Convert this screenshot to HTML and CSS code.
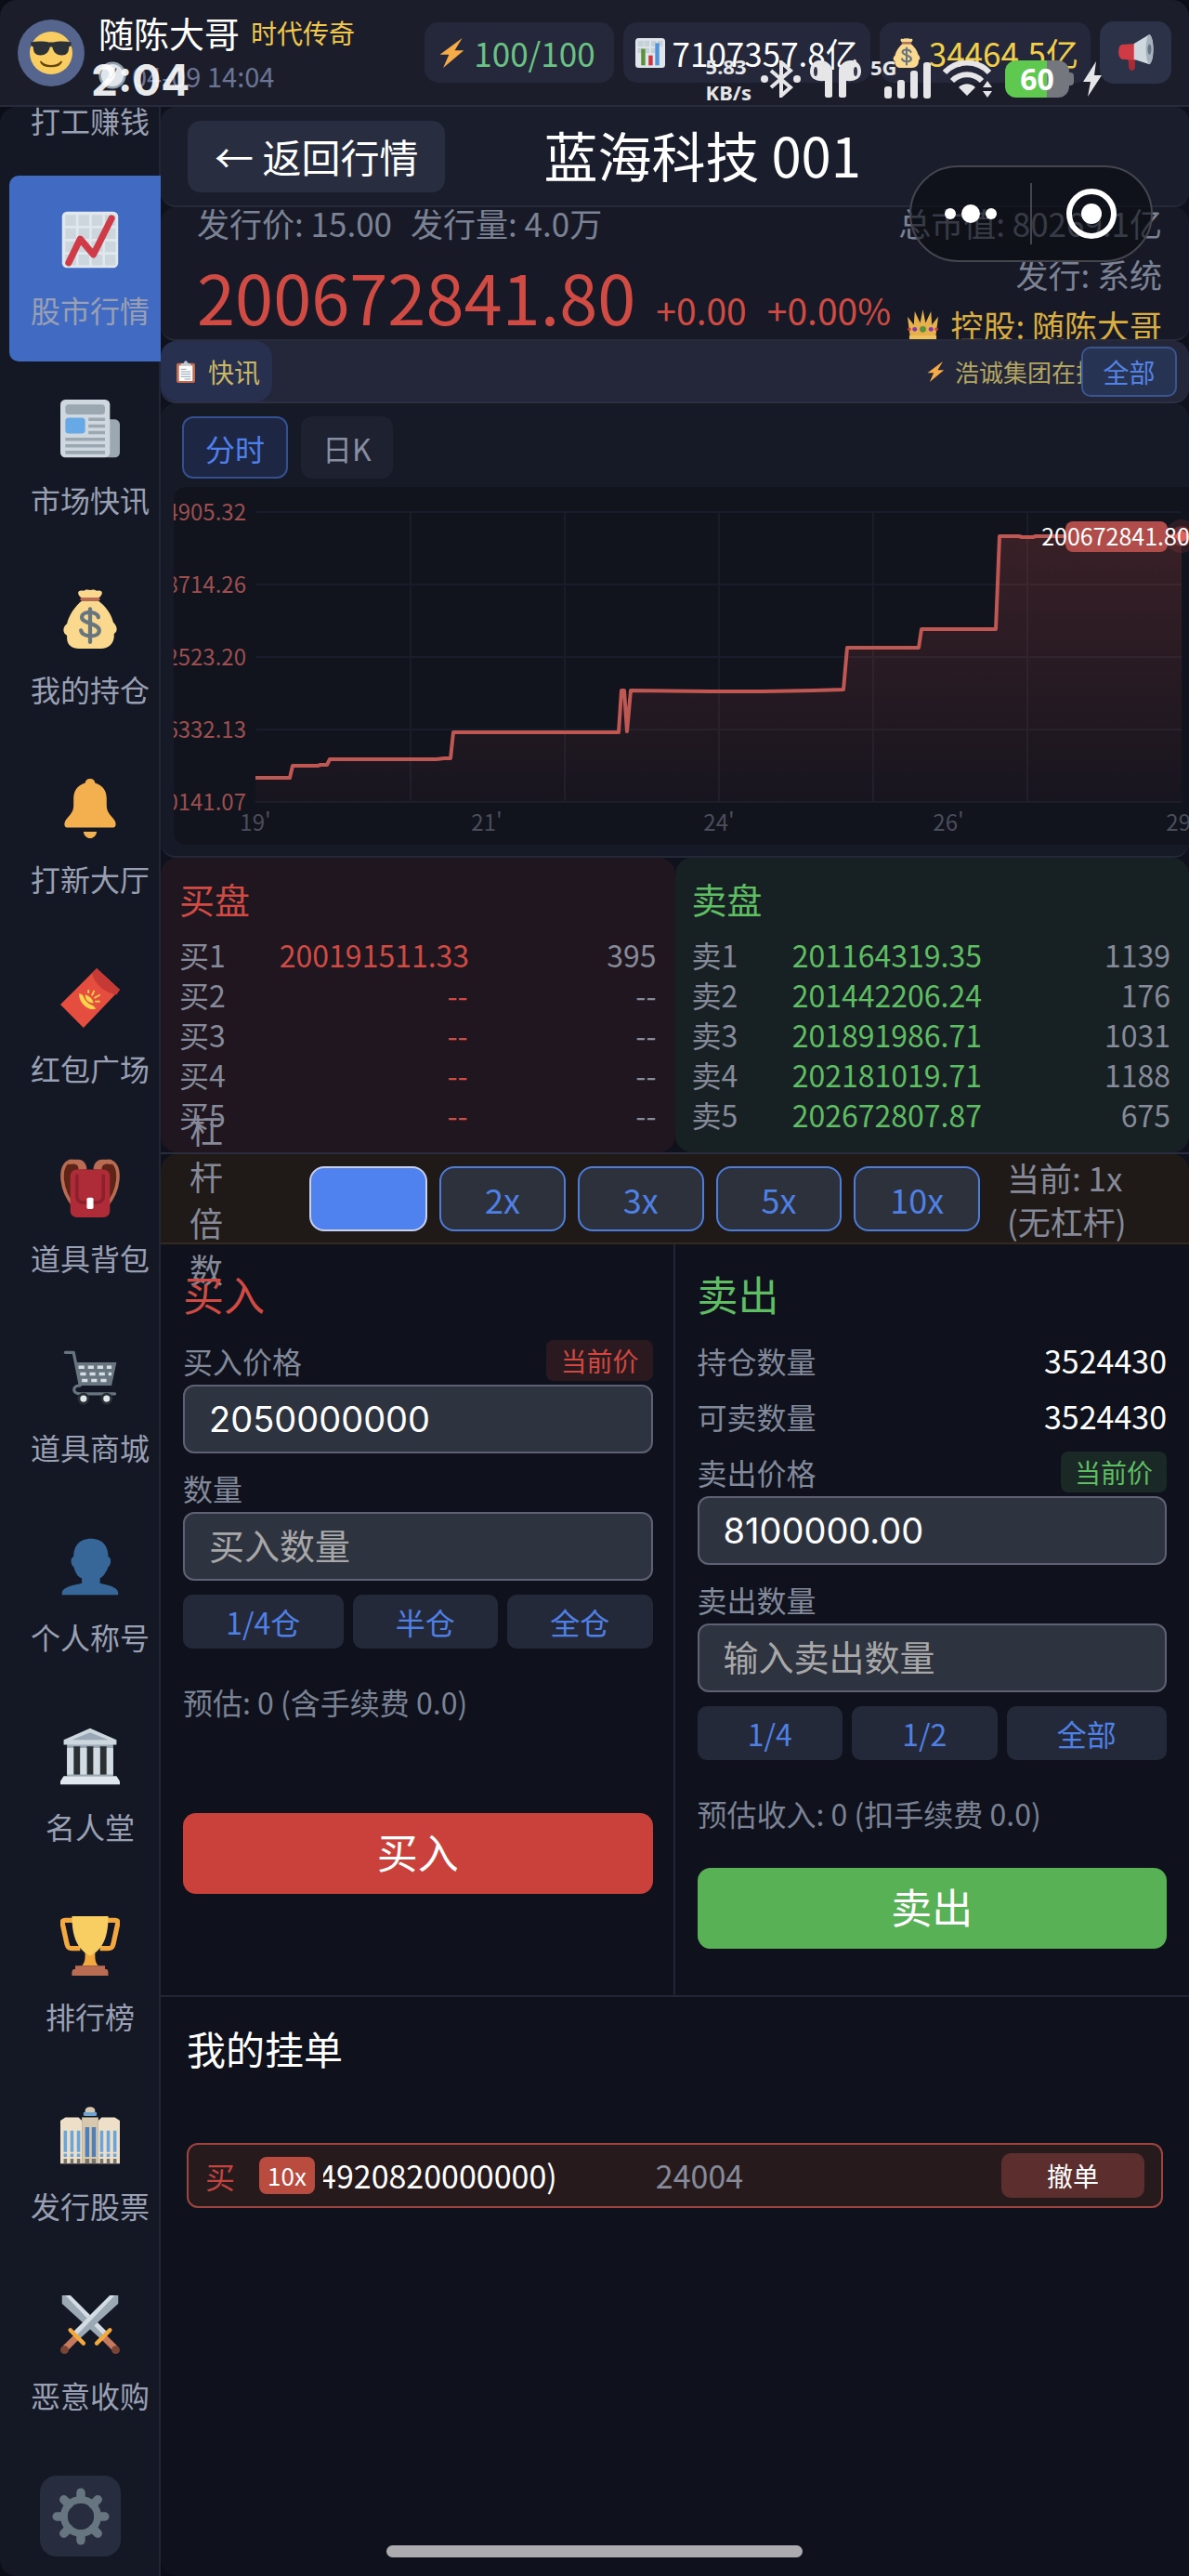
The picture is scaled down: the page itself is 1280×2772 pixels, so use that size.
FILE: index.html
```html
<!DOCTYPE html>
<html lang="zh-CN">
<head>
    <meta charset="UTF-8">
    <meta name="viewport" content="width=device-width, initial-scale=1">
    <title>蓝海科技 001</title>
    <link rel="stylesheet" href="styles.css">
</head>
<body>
    <!-- 图标库 -->
    <svg class="sprite" aria-hidden="true">
        <symbol id="i-cool" viewBox="0 0 36 36">
            <circle cx="18" cy="18" r="18" fill="#f9cd62"/>
            <path d="M1 9c5-1 11-1 15 0h4c4-1 10-1 15 0v3l-2 1c0 5-2 7-6 7s-7-2-8-7h-2c-1 5-4 7-8 7s-6-2-6-7l-2-1z" fill="#2b3136"/>
            <path d="M9 25c5 5 13 5 18 0-2 6-16 6-18 0z" fill="#664500" stroke="#664500"/>
        </symbol>
        <symbol id="i-clock" viewBox="0 0 36 36">
            <circle cx="18" cy="18" r="16" fill="#dfe5ea" stroke="#93a1ad" stroke-width="3"/>
            <path d="M18 19l5-10M18 19l-4 3" stroke="#55626d" stroke-width="2" fill="none"/>
        </symbol>
        <symbol id="i-bolt" viewBox="0 0 36 36">
            <path d="M31 0L4 20h11L8 36l25-21H22z" fill="#f6ab46"/>
        </symbol>
        <symbol id="i-bars" viewBox="0 0 36 36">
            <rect width="36" height="36" rx="4" fill="#dfe6eb"/>
            <path d="M3 3h7v7H3zM11 3h6v7h-6zM19 3h6v7h-6zM27 3h6v7h-6zM3 12h7v6H3zM11 12h6v6h-6zM19 12h6v6h-6z" fill="#c6d0d8"/>
            <path d="M7 13h5v20H7z" fill="#5c913b"/>
            <path d="M16 21h5v12h-5z" fill="#ca3540"/>
            <path d="M24 6h5v27h-5z" fill="#5095d8"/>
        </symbol>
        <symbol id="i-bag" viewBox="0 0 36 36">
            <path d="M13 7h10c4 3 8 8 9 13 3 3 2.500 6 .5 7 .5 6-3.500 9-8 9h-13C7 36 3.500 34 4 28 1.500 27 1 23 4 21 5 16 9 10 13 7z" fill="#fad98f"/>
            <path d="M12.500 5C10 3 10 0 14 1c2-1.300 3-.5 4-.5s2-.8 4 .5c4-1 4 2 1.500 4z" fill="#fad98f"/>
            <rect x="12" y="5" width="12" height="2" rx="1" fill="#bb6c52"/>
            <path d="M23 17c-1-4-10-4-10 0 0 4 10.500 3.500 10.500 8 0 4.500-10 4.500-11 0M18 12v20" fill="none" stroke="#67757f" stroke-width="2.400" stroke-linecap="round"/>
        </symbol>
        <symbol id="i-horn" viewBox="0 0 36 36">
            <path d="M10 18h7v14c0 4-6 4-6 0z" fill="#a82c36"/>
            <path d="M4 10l14-1v16l-14-1c-4-1-4-13 0-14z" fill="#cf3b45"/>
            <path d="M16 9L31 0c5 4 5 25 0 29l-15-5z" fill="#cfd8de"/>
            <ellipse cx="31" cy="14.500" rx="3.500" ry="14" fill="#a5b2bd"/>
            <ellipse cx="31" cy="14.500" rx="1.800" ry="5" fill="#66757f"/>
        </symbol>
        <symbol id="i-crown" viewBox="0 0 36 36">
            <path d="M4 33L1 9l7 9 1-15 6 13 3-15 3 15 6-13 1 15 7-9-3 24z" fill="#e6b04c"/>
            <path d="M3 30h30v6H3z" fill="#eec15c"/>
            <circle cx="18" cy="23" r="3.500" fill="#5c913b"/>
            <circle cx="9" cy="23" r="2.500" fill="#8536b0"/><circle cx="27" cy="23" r="2.500" fill="#8536b0"/>
            <circle cx="3" cy="23" r="1.800" fill="#cf3b45"/><circle cx="33" cy="23" r="1.800" fill="#cf3b45"/>
        </symbol>
        <symbol id="i-clip" viewBox="0 0 36 36">
            <rect x="3" y="4" width="30" height="32" rx="3" fill="#bf6b50"/>
            <path d="M7 8h22v25H7z" fill="#fff"/>
            <path d="M10 8V5l5-1c0-5 6-5 6 0l5 1v3z" fill="#bfcad2"/>
            <path d="M10 14h9M10 18h16M10 22h16M10 26h16M16 30h10" stroke="#8ea0b0" stroke-width="1.500"/>
        </symbol>
        <symbol id="i-chart" viewBox="0 0 36 36">
            <rect x="1" y="1" width="34" height="34" rx="3" fill="#e1e8ed"/>
            <path d="M3 3h6.500v6.500H3zM11 3h6.500v6.500H11zM19 3h6.500v6.500H19zM27 3h6.500v6.500H27zM3 11h6.500v6.500H3zM11 11h6.500v6.500H11zM19 11h6.500v6.500H19zM27 11h6.500v6.500H27zM3 19h6.500v6.500H3zM11 19h6.500v6.500H11zM19 19h6.500v6.500H19zM27 19h6.500v6.500H27zM3 27h6.500v6.500H3zM11 27h6.500v6.500H11zM19 27h6.500v6.500H19zM27 27h6.500v6.500H27z" fill="#ccd6dd"/>
            <path d="M5 32l7-14.500 8 9.500L31 5" fill="none" stroke="#cf3b47" stroke-width="4" stroke-linecap="round" stroke-linejoin="round"/>
        </symbol>
        <symbol id="i-news" viewBox="0 0 36 36">
            <rect x="26" y="12" width="10" height="23" rx="3" fill="#9ba7b1"/>
            <rect y="0" width="30" height="35" rx="3" fill="#cfd8de"/>
            <rect x="3" y="3" width="24" height="6" rx="2" fill="#9ba7b1"/>
            <rect x="3" y="11" width="12" height="9.500" rx="2" fill="#66a9e6"/>
            <path d="M17 12h10M17 16h10M17 20h10M3 24h24M3 28h24M3 32h24" stroke="#9ba7b1" stroke-width="2"/>
        </symbol>
        <symbol id="i-bell" viewBox="0 0 36 36">
            <path d="M18 0a3 3 0 0 1 3 2.500c5 1.500 7 5 7 9.500v4c0 5 3 6 5 9.500 1 2 .5 4-1 4H4c-1.500 0-2-2-1-4C5 22 8 21 8 16v-4c0-4.500 2-8 7-9.500A3 3 0 0 1 18 0zM14 32h8c0 2-2 4-4 4s-4-2-4-4z" fill="#f4b04f"/>
        </symbol>
        <symbol id="i-red" viewBox="0 0 36 36">
            <path d="M22 0l14 13-22 23L0 22z" fill="#e54e3e"/>
            <path d="M22 0l14 13-2 3c-7-1-13-6-15-13z" fill="#c63a35"/>
            <path d="M11.500 15c-1 5 5 11 10 9.500-1-1.500-2-2-3-2.500-2-1-4-3-4.500-5-.5-1-1.500-1.500-2.500-2z" fill="#fbd34d"/>
            <path d="M15 16c2 0 5 3 5 5-3 0-5-2-5-5z" fill="#fbd34d"/>
            <path d="M17 15l0-2M19 16.500l1.500-3M20.500 18l3.500-2M21 20l3 0" stroke="#fbd34d"/>
        </symbol>
        <symbol id="i-pack" viewBox="0 0 36 36">
            <path d="M8 29C-1 18-1 2 7 2c4 0 6 1 7 4" fill="#5f2416" stroke="#b96c52" stroke-width="2"/>
            <path d="M28 29c9-11 9-27 1-27-4 0-6 1-7 4" fill="#5f2416" stroke="#b96c52" stroke-width="2"/>
            <path d="M5 1h6c3 0 5 3 5 6h-5c0-3-2-4-6-3zM31 1h-6c-3 0-5 3-5 6h5c0-3 2-4 6-3z" fill="#b96c52"/>
            <rect x="6" y="7" width="24" height="29" rx="4" fill="#ad2c38"/>
            <path d="M10 10v13c0 3 2 4 4 4h8c2 0 4-1 4-4V10" fill="none" stroke="#8e1f2c" stroke-width="2"/>
            <rect x="16" y="24" width="4" height="7" rx="1" fill="#fff"/>
        </symbol>
        <symbol id="i-cart" viewBox="0 0 36 36">
            <path d="M3 3h5l4 20c-5 0-5 5 0 5h21" fill="none" stroke="#66757f" stroke-width="1.800" stroke-linecap="round" stroke-linejoin="round"/>
            <path d="M9 9h25l-3 14H12z" fill="#66757f"/>
            <path d="M11 12h20M12 16h19M13 20h17" stroke="#d5dde2" stroke-width="2" stroke-dasharray="3.500 2.200"/>
            <circle cx="14" cy="31" r="3.600" fill="#292f33"/><circle cx="28" cy="31" r="3.600" fill="#292f33"/>
            <circle cx="14" cy="31" r="2" fill="#e1e8ed"/><circle cx="28" cy="31" r="2" fill="#e1e8ed"/>
        </symbol>
        <symbol id="i-bust" viewBox="0 0 36 36">
            <path d="M18.500 1C26 1 29 6 29 12c2 0 2 5 0 6-1 3-3 6-5 7v3c4 1 11 2 11 6v1H1v-1c0-4 8-5 12-6v-3c-3-1-4-4-5-7-2-1-2-6 0-6 0-6 3-11 10.500-11z" fill="#366798"/>
        </symbol>
        <symbol id="i-bank" viewBox="0 0 36 36">
            <path d="M4 10h28v20H4z" fill="#9ba9b4"/>
            <path d="M18 1L2 8v3h32V8z" fill="#ccd6dd"/>
            <path d="M18 3.500L7 8h22z" fill="#99a8b4"/>
            <path d="M8 12h4v17H8zM16 12h4v17h-4zM24 12h4v17h-4z" fill="#292f33"/>
            <path d="M4 13h4v16H4zM12 13h4v16h-4zM20 13h4v16h-4zM28 13h4v16h-4z" fill="#d3dce2"/>
            <path d="M2 30h32l2 3v2H0v-2z" fill="#e1e8ed"/>
        </symbol>
        <symbol id="i-cup" viewBox="0 0 36 36">
            <path d="M8 2.500H3c-2 0-2 1-1.500 3L4 17c.5 2 1 2.500 3 2.500h5M28 2.500h5c2 0 2 1 1.500 3L32 17c-.5 2-1 2.500-3 2.500h-5" fill="none" stroke="#f4a93f" stroke-width="3"/>
            <path d="M15 22h6c0 4 0 6 2 8H13c2-2 2-4 2-8z" fill="#f4a93f"/>
            <path d="M7 0h22c0 12-3 20-11 24C10 20 7 12 7 0z" fill="#f8ce62"/>
            <path d="M9 30h18v2c2 0 2 1 2 4H7c0-3 0-4 2-4z" fill="#b96c52"/>
        </symbol>
        <symbol id="i-hall" viewBox="0 0 36 36">
            <path d="M0 9l3-2h8l2 2v26H0zM36 9l-3-2h-8l-2 2v26h13z" fill="#eddfc8"/>
            <path d="M13 7h10v28H13z" fill="#d8c8ad"/>
            <path d="M15 3c0-3 6-3 6 0v3h-6z" fill="#d8c8ad"/>
            <path d="M14 4h8v2h-8zM2 15h2v13H2zM6 15h2v13H6zM10 15h2v13h-2zM24 15h2v13h-2zM28 15h2v13h-2zM32 15h2v13h-2zM2 29h2v2H2zM6 29h2v2H6zM10 29h2v2h-2zM24 29h2v2h-2zM28 29h2v2h-2zM32 29h2v2h-2z" fill="#69a5db"/>
            <path d="M15 13h2.500v18H15zM19 13h2.500v18H19z" fill="#4d7fb8"/>
            <path d="M2 32h2v3H2zM6 32h2v3H6zM10 32h2v3h-2zM15 32h2.500v3H15zM19 32h2.500v3H19zM24 32h2v3h-2zM28 32h2v3h-2zM32 32h2v3h-2z" fill="#77736d"/>
        </symbol>
        <symbol id="i-swords" viewBox="0 0 36 36">
            <path d="M1 0h5l22 22-4 4L1 5z" fill="#9aa9b4"/><path d="M6 0l22 22-2 2L3 0z" fill="#d3dce2"/>
            <path d="M26 25l7 7" stroke="#c6795c" stroke-width="4"/><circle cx="33.500" cy="33" r="2.500" fill="#7b4536"/>
            <path d="M22 29l8-8" stroke="#f4a93f" stroke-width="2.500" stroke-linecap="round"/>
            <path d="M35 0h-5L8 22l4 4L35 5z" fill="#9aa9b4"/><path d="M30 0L8 22l2 2L33 0z" fill="#d3dce2"/>
            <path d="M10 25l-7 7" stroke="#c6795c" stroke-width="4"/><circle cx="2.500" cy="33" r="2.500" fill="#7b4536"/>
            <path d="M14 29l-8-8" stroke="#f4a93f" stroke-width="2.500" stroke-linecap="round"/>
        </symbol>
        <symbol id="i-gear" viewBox="0 0 36 36">
            <circle cx="18" cy="18" r="10.500" fill="none" stroke="#66757f" stroke-width="4.500"/>
            <path d="M18 3v4M18 29v4M3 18h4M29 18h4M7.400 7.400l3 3M25.600 25.600l3 3M28.600 7.400l-3 3M10.400 25.600l-3 3" stroke="#66757f" stroke-width="5.500" stroke-linecap="round"/>
        </symbol>
    </svg>

    <div class="page">
        <header class="topbar">
            <div class="avatar"><svg><use href="#i-cool"/></svg></div>
            <div class="player">
                <div class="player-name"><span>随陈大哥</span><span class="player-rank">时代传奇</span></div>
                <div class="player-time"><svg><use href="#i-clock"/></svg>04-09 14:04</div>
            </div>
            <div class="stats">
                <div class="stat stat-energy"><svg><use href="#i-bolt"/></svg>100/100</div>
                <div class="stat"><svg><use href="#i-bars"/></svg>7107357.8亿</div>
                <div class="stat stat-gold"><svg><use href="#i-bag"/></svg>34464.5亿</div>
                <button class="horn" type="button" aria-label="公告"><svg><use href="#i-horn"/></svg></button>
            </div>
        </header>

        <div class="layout">
            <aside class="sidebar">
                <nav class="menu">
                    <a class="menu-item" href="#"><svg><use href="#i-bag"/></svg>打工赚钱</a>
                    <a class="menu-item active" href="#"><svg><use href="#i-chart"/></svg>股市行情</a>
                    <a class="menu-item" href="#"><svg><use href="#i-news"/></svg>市场快讯</a>
                    <a class="menu-item" href="#"><svg><use href="#i-bag"/></svg>我的持仓</a>
                    <a class="menu-item" href="#"><svg><use href="#i-bell"/></svg>打新大厅</a>
                    <a class="menu-item" href="#"><svg><use href="#i-red"/></svg>红包广场</a>
                    <a class="menu-item" href="#"><svg><use href="#i-pack"/></svg>道具背包</a>
                    <a class="menu-item" href="#"><svg><use href="#i-cart"/></svg>道具商城</a>
                    <a class="menu-item" href="#"><svg><use href="#i-bust"/></svg>个人称号</a>
                    <a class="menu-item" href="#"><svg><use href="#i-bank"/></svg>名人堂</a>
                    <a class="menu-item" href="#"><svg><use href="#i-cup"/></svg>排行榜</a>
                    <a class="menu-item" href="#"><svg><use href="#i-hall"/></svg>发行股票</a>
                    <a class="menu-item" href="#"><svg><use href="#i-swords"/></svg>恶意收购</a>
                </nav>
                <button class="gear" type="button" aria-label="设置"><svg><use href="#i-gear"/></svg></button>
            </aside>

            <main class="main">
                <div class="stock-head">
                    <button class="back" type="button">← 返回行情</button>
                    <h1>蓝海科技 001</h1>
                </div>

                <section class="info">
                    <div class="info-left">
                        <div class="issue"><span>发行价: 15.00</span><span>发行量: 4.0万</span></div>
                        <div class="quote">
                            <span class="price">200672841.80</span>
                            <span class="change">+0.00</span>
                            <span class="change">+0.00%</span>
                        </div>
                    </div>
                    <div class="info-right">
                        <div>总市值: 80269.1亿</div>
                        <div>发行: 系统</div>
                        <div class="holder"><svg><use href="#i-crown"/></svg>控股: 随陈大哥</div>
                    </div>
                </section>

                <section class="ticker">
                    <div class="ticker-tag"><svg><use href="#i-clip"/></svg>快讯</div>
                    <div class="ticker-text"><span><svg><use href="#i-bolt"/></svg>浩诚集团在拉</span></div>
                    <button class="ticker-all" type="button">全部</button>
                </section>

                <section class="chart-box">
                    <div class="tabs">
                        <button class="tab active" type="button">分时</button>
                        <button class="tab" type="button">日K</button>
                    </div>
                    <div class="chart">
                        <svg viewBox="0 0 1093 385">
                            <defs>
                                <linearGradient id="area" x1="0" y1="0" x2="0" y2="1">
                                    <stop offset="0" stop-color="#d9534f" stop-opacity="0.200"/>
                                    <stop offset="1" stop-color="#d9534f" stop-opacity="0.030"/>
                                </linearGradient>
                            </defs>
                            <path class="grid" d="M88 27h997M88 105h997M88 183h997M88 261h997M88 339h997M255 27v312M421 27v312M587 27v312M753 27v312M919 27v312"/>
                            <path fill="url(#area)" d="M88 313h37l3-13h27l3-1h7l3-6h115l8-1h7l3-28h178l3-45h3l3 44 4-44 91 1h53l53-1 32-1 4-45h77l3-20h80l4-100h21l3 1h12l3-1h157v286H88z"/>
                            <path class="line" d="M88 313h37l3-13h27l3-1h7l3-6h115l8-1h7l3-28h178l3-45h3l3 44 4-44 91 1h53l53-1 32-1 4-45h77l3-20h80l4-100h21l3 1h12l3-1h157"/>
                            <g class="axis-y">
                                <text x="78" y="36">4905.32</text>
                                <text x="78" y="114">8714.26</text>
                                <text x="78" y="192">2523.20</text>
                                <text x="78" y="270">6332.13</text>
                                <text x="78" y="348">0141.07</text>
                            </g>
                            <g class="axis-x">
                                <text x="88" y="370">19'</text>
                                <text x="337" y="370">21'</text>
                                <text x="587" y="370">24'</text>
                                <text x="834" y="370">26'</text>
                                <text x="1085" y="370">29'</text>
                            </g>
                            <circle cx="1085" cy="53" r="18" fill="#d9534f" opacity="0.150"/>
                            <circle cx="1085" cy="53" r="11" fill="#d9534f" opacity="0.300"/>
                            <circle cx="1085" cy="53" r="6" fill="#e0605a"/>
                            <rect x="960" y="37" width="110" height="33" rx="8" fill="#b04c4a"/>
                            <text class="now" x="1014" y="63">200672841.80</text>
                        </svg>
                    </div>
                </section>

                <section class="book">
                    <div class="book-side buy">
                        <h2>买盘</h2>
                        <table>
                            <tr><td>买1</td><td>200191511.33</td><td>395</td></tr>
                            <tr><td>买2</td><td>--</td><td>--</td></tr>
                            <tr><td>买3</td><td>--</td><td>--</td></tr>
                            <tr><td>买4</td><td>--</td><td>--</td></tr>
                            <tr><td>买5</td><td>--</td><td>--</td></tr>
                        </table>
                    </div>
                    <div class="book-side sell">
                        <h2>卖盘</h2>
                        <table>
                            <tr><td>卖1</td><td>201164319.35</td><td>1139</td></tr>
                            <tr><td>卖2</td><td>201442206.24</td><td>176</td></tr>
                            <tr><td>卖3</td><td>201891986.71</td><td>1031</td></tr>
                            <tr><td>卖4</td><td>202181019.71</td><td>1188</td></tr>
                            <tr><td>卖5</td><td>202672807.87</td><td>675</td></tr>
                        </table>
                    </div>
                </section>

                <section class="lever">
                    <div class="lever-label">杠杆倍数</div>
                    <div class="lever-list">
                        <button class="lever-btn active" type="button" aria-label="1x"></button>
                        <button class="lever-btn" type="button">2x</button>
                        <button class="lever-btn" type="button">3x</button>
                        <button class="lever-btn" type="button">5x</button>
                        <button class="lever-btn" type="button">10x</button>
                    </div>
                    <div class="lever-now">当前: 1x<br>(无杠杆)</div>
                </section>

                <section class="trade">
                    <form class="panel buy">
                        <h2>买入</h2>
                        <div class="row"><label for="buy-price">买入价格</label><button class="now-price" type="button">当前价</button></div>
                        <input class="field" id="buy-price" type="text" value="2050000000">
                        <div class="row"><label for="buy-count">数量</label></div>
                        <input class="field" id="buy-count" type="text" placeholder="买入数量">
                        <div class="quick">
                            <button type="button">1/4仓</button>
                            <button type="button">半仓</button>
                            <button type="button">全仓</button>
                        </div>
                        <p class="estimate">预估: 0 (含手续费 0.0)</p>
                        <button class="submit" type="button">买入</button>
                    </form>
                    <form class="panel sell">
                        <h2>卖出</h2>
                        <div class="row"><span>持仓数量</span><b>3524430</b></div>
                        <div class="row"><span>可卖数量</span><b>3524430</b></div>
                        <div class="row"><label for="sell-price">卖出价格</label><button class="now-price" type="button">当前价</button></div>
                        <input class="field" id="sell-price" type="text" value="8100000.00">
                        <div class="row"><label for="sell-count">卖出数量</label></div>
                        <input class="field" id="sell-count" type="text" placeholder="输入卖出数量">
                        <div class="quick">
                            <button type="button">1/4</button>
                            <button type="button">1/2</button>
                            <button type="button">全部</button>
                        </div>
                        <p class="estimate">预估收入: 0 (扣手续费 0.0)</p>
                        <button class="submit" type="button">卖出</button>
                    </form>
                </section>

                <section class="orders">
                    <h2>我的挂单</h2>
                    <div class="order">
                        <span class="order-type">买</span>
                        <span class="order-lever">10x</span>
                        <span class="order-price"><span>(4920820000000)</span></span>
                        <span class="order-count">24004</span>
                        <button class="cancel" type="button">撤单</button>
                    </div>
                </section>
            </main>
        </div>
    </div>

    <!-- 系统状态栏 -->
    <div class="status-time">2:04</div>
    <div class="status">
        <div class="speed">5.83<br>KB/s</div>
        <svg width="43" height="40" viewBox="0 0 43 40">
            <path d="M11 11l21 18-10 9V2l10 9-21 18" fill="none" stroke="#e6e6e8" stroke-width="4"/>
            <circle cx="4" cy="20" r="4" fill="#e6e6e8"/><circle cx="39" cy="20" r="4" fill="#e6e6e8"/>
        </svg>
        <svg width="55" height="40" viewBox="0 0 55 40" fill="#e6e6e8">
            <path d="M9 0c8-1 15 5 15 11v27c0 3-8 3-8 0V22C6 23 0 19 0 12 0 6 3 1 9 0zM46 0c-8-1-15 5-15 11v27c0 3 8 3 8 0V22c10 1 16-3 16-10 0-6-3-11-9-12z"/>
            <ellipse cx="6" cy="12" rx="2" ry="5" fill="#333849"/><ellipse cx="49" cy="12" rx="2" ry="5" fill="#333849"/>
        </svg>
        <svg width="67" height="44" viewBox="0 0 67 44" fill="#e6e6e8">
            <text class="net" x="0" y="18">5G</text>
            <rect x="15" y="30" width="8" height="13" rx="3"/><rect x="29" y="23" width="8" height="20" rx="3"/>
            <rect x="43" y="13" width="8" height="30" rx="3"/><rect x="57" y="4" width="8" height="39" rx="3"/>
        </svg>
        <svg width="55" height="40" viewBox="0 0 55 40">
            <path d="M3 13C16-1 38-1 51 13M11 22c9-9 23-9 32 0" fill="none" stroke="#e6e6e8" stroke-width="6"/>
            <path d="M27 38l-9-9c5-5 13-5 18 0zM49 22l5 7H44zM49 40l5-7H44z" fill="#e6e6e8"/>
        </svg>
        <div class="battery">60</div>
        <svg width="20" height="38" viewBox="0 0 20 38"><path d="M14 0L0 22h8L5 38l15-23h-8z" fill="#e6e6e8"/></svg>
    </div>

    <!-- 小程序胶囊按钮 -->
    <div class="capsule">
        <button type="button" aria-label="更多">
            <svg width="56" height="20" viewBox="0 0 56 20" fill="#fff"><circle cx="6" cy="10" r="6"/><circle cx="28" cy="10" r="10"/><circle cx="50" cy="10" r="6"/></svg>
        </button>
        <button type="button" aria-label="关闭">
            <svg width="56" height="56" viewBox="0 0 56 56"><circle cx="28" cy="28" r="24" fill="none" stroke="#fff" stroke-width="6"/><circle cx="28" cy="28" r="11" fill="#fff"/></svg>
        </button>
    </div>
    <div class="home-bar"></div>
</body>
</html>
```
FILE: styles.css
```css
* {
    box-sizing: border-box;
}
body {
    margin: 0;
    position: relative;
    background: #0b0d17;
    color: #fff;
    font-family: "Noto Sans CJK SC", sans-serif;
    font-size: 32px;
    line-height: 44px;
    overflow-x: hidden;
}
h1, h2, p {
    margin: 0;
    font-weight: 400;
}
button {
    border: none;
    padding: 0;
    color: inherit;
    font-family: inherit;
    cursor: pointer;
}
a {
    text-decoration: none;
}
svg {
    display: block;
    flex: none;
}
.sprite {
    position: absolute;
    width: 0;
    height: 0;
}
.page {
    display: flex;
    flex-direction: column;
    min-height: 100vh;
}

/* 顶部栏 */
.topbar {
    display: flex;
    align-items: center;
    height: 115px;
    padding: 0 19px;
    background: #1b1e2a;
    border-bottom: 2px solid #272b3c;
    border-radius: 18px 18px 0 0;
}
.avatar {
    display: flex;
    align-items: center;
    justify-content: center;
    flex: none;
    width: 72px;
    height: 72px;
    border-radius: 50%;
    background: #55658d;
}
.avatar svg {
    width: 46px;
    height: 46px;
}
.player {
    margin-left: 15px;
    white-space: nowrap;
}
.player-name {
    display: flex;
    align-items: center;
    gap: 12px;
    font-size: 38px;
    line-height: 48px;
}
.player-rank {
    font-size: 28px;
    color: #f2c94c;
}
.player-time {
    display: flex;
    align-items: center;
    gap: 6px;
    font-size: 29px;
    color: #6b7495;
}
.player-time svg {
    width: 30px;
    height: 30px;
}
.stats {
    display: flex;
    align-items: center;
    gap: 10px;
    margin-left: auto;
}
.stat {
    display: flex;
    align-items: center;
    gap: 8px;
    height: 65px;
    padding: 0 13px;
    border-radius: 15px;
    background: #24283a;
    font-size: 35px;
}
.stat svg {
    width: 32px;
    height: 34px;
}
.stat-energy {
    padding-right: 20px;
    color: #6cc285;
}
.stat-gold {
    color: #f2cf4a;
}
.horn {
    display: flex;
    align-items: center;
    justify-content: center;
    width: 77px;
    height: 67px;
    border-radius: 15px;
    background: #2c3247;
}
.horn svg {
    width: 46px;
    height: 40px;
}

.layout {
    display: flex;
    flex: 1;
}

/* 左侧菜单 */
.sidebar {
    flex: none;
    width: 173px;
    overflow: hidden;
    border-radius: 18px 0 0 18px;
    background: linear-gradient(to left, #212637 2px, #141824 2px);
}
.menu {
    margin-top: -130px;
}
.menu-item {
    display: flex;
    flex-direction: column;
    align-items: center;
    gap: 21px;
    height: 200px;
    margin: 0 0 4px 10px;
    padding: 37px 0 0 11px;
    border-radius: 10px 0 0 10px;
    color: #9aa0b4;
    white-space: nowrap;
}
.menu-item.active {
    background: #416ac2;
}
.menu-item svg {
    width: 64px;
    height: 64px;
}
.gear {
    display: flex;
    align-items: center;
    justify-content: center;
    width: 87px;
    height: 87px;
    margin: 31px 0 17px 43px;
    border-radius: 18px;
    background: #272c3f;
}
.gear svg {
    width: 62px;
    height: 62px;
}

.main {
    flex: 1;
    min-width: 0;
    background: #0f121c;
    border-radius: 0 0 0 18px;
}

/* 股票标题 */
.stock-head {
    display: flex;
    align-items: center;
    gap: 106px;
    height: 108px;
    padding: 0 29px;
    background: #1a1d2b;
    border-bottom: 2px solid #25293a;
    border-radius: 16px;
}
.back {
    height: 77px;
    padding: 0 29px;
    border-radius: 14px;
    background: #282d40;
    font-size: 42px;
    line-height: 70px;
    white-space: nowrap;
}
.stock-head h1 {
    padding-bottom: 4px;
    font-size: 58px;
    line-height: 80px;
    white-space: nowrap;
}
.info {
    display: flex;
    align-items: center;
    justify-content: space-between;
    height: 144px;
    padding: 0 29px 0 39px;
    overflow: hidden;
    background: #171a26;
    border-bottom: 2px solid #272b3c;
    border-radius: 16px;
    font-size: 35px;
    line-height: 55px;
    color: #7b8294;
    white-space: nowrap;
}
.issue {
    display: flex;
    gap: 20px;
}
.quote {
    display: flex;
    align-items: baseline;
    gap: 22px;
    height: 110px;
    line-height: 102px;
    color: #d04b43;
}
.price {
    font-size: 74px;
}
.change {
    font-size: 39px;
}
.info-right {
    display: flex;
    flex-direction: column;
    align-items: flex-end;
}
.holder {
    display: flex;
    align-items: center;
    gap: 12px;
    color: #d9ad3f;
}
.holder svg {
    width: 35px;
    height: 35px;
}

/* 快讯 */
.ticker {
    display: flex;
    align-items: center;
    height: 67px;
    padding-right: 13px;
    background: #24273a;
    border-bottom: 2px solid #2c3042;
    border-radius: 16px;
    font-size: 28px;
}
.ticker-tag {
    display: flex;
    align-items: center;
    gap: 12px;
    height: 65px;
    padding: 0 13px 0 15px;
    border-radius: 18px;
    background: #28304f;
    color: #c8b765;
}
.ticker-tag svg {
    width: 24px;
    height: 30px;
}
.ticker-text {
    display: flex;
    justify-content: flex-end;
    flex: 1;
    overflow: hidden;
    font-size: 26px;
    color: #b3a562;
}
.ticker-text span {
    display: flex;
    align-items: center;
    gap: 10px;
    margin-right: -20px;
    white-space: nowrap;
}
.ticker-text svg {
    width: 22px;
    height: 26px;
}
.ticker-all {
    width: 103px;
    height: 54px;
    border: 2px solid #3a5590;
    border-radius: 10px;
    background: #273352;
    font-size: 28px;
    color: #5583e4;
}

/* 分时图 */
.chart-box {
    padding: 14px 0 12px 14px;
    background: #161926;
    border-bottom: 2px solid #242839;
    border-radius: 16px;
    overflow: hidden;
}
.tabs {
    display: flex;
    gap: 14px;
    padding: 0 9px 9px;
}
.tab {
    height: 67px;
    padding: 0 23px;
    border-radius: 12px;
    background: #1d2130;
    font-size: 32px;
    color: #888ea0;
}
.tab.active {
    border: 2px solid #34508f;
    background: #1d2744;
    color: #4f80ec;
}
.chart {
    overflow: hidden;
    border-radius: 14px 0 0 14px;
    background: #11131d;
}
.chart svg {
    width: 100%;
}
.chart text {
    font-size: 24px;
}
.grid {
    fill: none;
    stroke: #1a1d29;
    stroke-width: 2;
}
.line {
    fill: none;
    stroke: #bf5753;
    stroke-width: 4;
    stroke-linejoin: round;
}
.axis-y {
    fill: #9c4f50;
    text-anchor: end;
}
.axis-x {
    fill: #4a4e5a;
    text-anchor: middle;
}
.chart .now {
    fill: #fff;
    font-size: 25px;
    text-anchor: middle;
}

/* 盘口 */
.book {
    display: grid;
    grid-template-columns: 1fr 1fr;
    border-bottom: 2px solid #2b2c3d;
}
.book-side {
    padding: 19px 20px;
    border-radius: 18px;
}
.book-side.buy {
    background: #1f1620;
}
.book-side.sell {
    padding-left: 18px;
    background: #172022;
}
.book-side h2 {
    margin-bottom: 14px;
    font-size: 38px;
    line-height: 50px;
}
.buy h2 {
    color: #d04b43;
}
.sell h2 {
    color: #5fbd63;
}
.book-side table {
    width: 100%;
    border-collapse: collapse;
    table-layout: fixed;
    line-height: 43px;
    color: #868a99;
}
.book-side td {
    padding: 0;
    text-align: right;
}
.book-side td:first-child {
    width: 21%;
    text-align: left;
}
.book-side.buy td:nth-child(2) {
    color: #d04b43;
}
.book-side.sell td:nth-child(2) {
    color: #5fbd63;
}

/* 杠杆 */
.lever {
    display: flex;
    align-items: center;
    height: 97px;
    padding: 0 31px;
    background: #1f1a17;
    border-bottom: 2px solid #33291f;
    border-radius: 18px 18px 0 0;
    color: #868a98;
}
.lever-label {
    flex: none;
    width: 36px;
    margin: -60px 0;
    font-size: 36px;
    line-height: 50px;
}
.lever-list {
    display: flex;
    flex: 1;
    gap: 13px;
    margin: 0 29px 0 93px;
}
.lever-btn {
    flex: 1;
    height: 70px;
    border: 2px solid #4d7ddc;
    border-radius: 16px;
    background: #2d313c;
    font-size: 36px;
    line-height: 60px;
    color: #4f80e4;
}
.lever-btn.active {
    flex: 0 0 127px;
    border-color: #c8d0ea;
    background: #4f82ee;
}
.lever-now {
    flex: none;
    width: 165px;
    font-size: 35px;
    line-height: 47px;
}

/* 交易面板 */
.trade {
    display: grid;
    grid-template-columns: 1fr 1fr;
    border-bottom: 2px solid #212536;
}
.panel {
    display: flex;
    flex-direction: column;
    padding: 23px 24px 50px;
}
.panel.buy {
    padding-right: 22px;
    border-right: 2px solid #212536;
}
.panel h2 {
    position: relative;
    margin-bottom: 20px;
    font-size: 44px;
    line-height: 60px;
}
.row {
    display: flex;
    align-items: center;
    justify-content: space-between;
    height: 44px;
    margin-bottom: 4px;
    color: #82899a;
}
.row b {
    font-size: 34px;
    font-weight: 400;
    color: #fff;
}
.row:has(b) {
    margin-bottom: 16px;
}
.now-price {
    height: 44px;
    padding: 0 15px;
    border-radius: 8px;
    font-size: 28px;
}
.buy .now-price {
    background: #2b1920;
    color: #d0483f;
}
.sell .now-price {
    background: #1a2826;
    color: #5fbd63;
}
.field {
    width: 100%;
    height: 74px;
    margin-bottom: 15px;
    padding: 0 26px;
    border: 2px solid #5f6073;
    border-radius: 12px;
    background: #2e3340;
    color: #fff;
    font-family: Inter, "Noto Sans CJK SC", sans-serif;
    font-size: 38px;
}
.field::placeholder {
    color: #a8a8a8;
    opacity: 1;
}
.quick {
    display: flex;
    gap: 10px;
}
.quick button {
    flex: 1 1 auto;
    height: 58px;
    border-radius: 10px;
    background: #242939;
    font-size: 32px;
    color: #4f80e4;
}
.estimate {
    margin: 35px 0 37px;
    color: #7b8294;
}
.buy .estimate {
    min-height: 105px;
}
.submit {
    height: 87px;
    padding-bottom: 6px;
    border-radius: 14px;
    font-size: 44px;
}
.buy .submit {
    background: #c9413a;
}
.sell .submit {
    background: #59b156;
}

/* 挂单 */
.orders {
    padding: 25px 28px;
}
.orders h2 {
    margin-bottom: 72px;
    font-size: 42px;
    line-height: 60px;
}
.order {
    display: flex;
    align-items: center;
    height: 70px;
    padding: 0 18px;
    border: 2px solid #9c453f;
    border-radius: 12px;
    background: #261a1d;
}
.order-type {
    color: #c2453f;
}
.order-lever {
    margin-left: 26px;
    padding: 0 9px;
    border-radius: 8px;
    background: #ba4b3f;
    font-size: 26px;
    line-height: 40px;
}
.order-price {
    display: flex;
    justify-content: flex-end;
    width: 252px;
    margin-left: 9px;
    overflow: hidden;
    font-size: 34px;
}
.order-count {
    margin-left: 106px;
    font-size: 34px;
    color: #868a99;
}
.cancel {
    width: 154px;
    height: 48px;
    margin-left: auto;
    border-radius: 10px;
    background: #5c2e2e;
    font-size: 28px;
}

/* 浮层 */
.status-time {
    position: absolute;
    top: 59px;
    left: 98px;
    font-family: Inter, sans-serif;
    font-size: 46px;
    font-weight: 700;
    line-height: 54px;
    opacity: 0.9;
}
.status {
    position: absolute;
    top: 58px;
    right: 94px;
    display: flex;
    align-items: center;
    gap: 10px;
    height: 54px;
    color: #e6e6e8;
    font-family: "Noto Sans", sans-serif;
    font-weight: 700;
}
.speed {
    font-size: 22px;
    line-height: 28px;
}
.net {
    font-size: 22px;
}
.battery {
    position: relative;
    width: 69px;
    height: 40px;
    margin: 0 5px 0 3px;
    border-radius: 12px;
    background: linear-gradient(to right, #5fc94f 65%, #75777f 65%);
    color: #fff;
    font-size: 32px;
    line-height: 40px;
    text-align: center;
}
.battery::after {
    content: "";
    position: absolute;
    top: 13px;
    right: -5px;
    width: 5px;
    height: 14px;
    border-radius: 0 4px 4px 0;
    background: #75777f;
}
.capsule {
    position: absolute;
    top: 178px;
    right: 39px;
    display: flex;
    align-items: center;
    width: 262px;
    height: 104px;
    border: 2px solid #45464d;
    border-radius: 52px;
    background: rgba(10, 11, 16, 0.6);
}
.capsule button {
    display: flex;
    align-items: center;
    justify-content: center;
    flex: 1;
    height: 66px;
    background: none;
}
.capsule button + button {
    border-left: 2px solid #45464d;
}
.home-bar {
    position: absolute;
    bottom: 20px;
    left: 50%;
    width: 35%;
    height: 13px;
    border-radius: 7px;
    background: #acacb0;
    transform: translateX(-50%);
}
```
